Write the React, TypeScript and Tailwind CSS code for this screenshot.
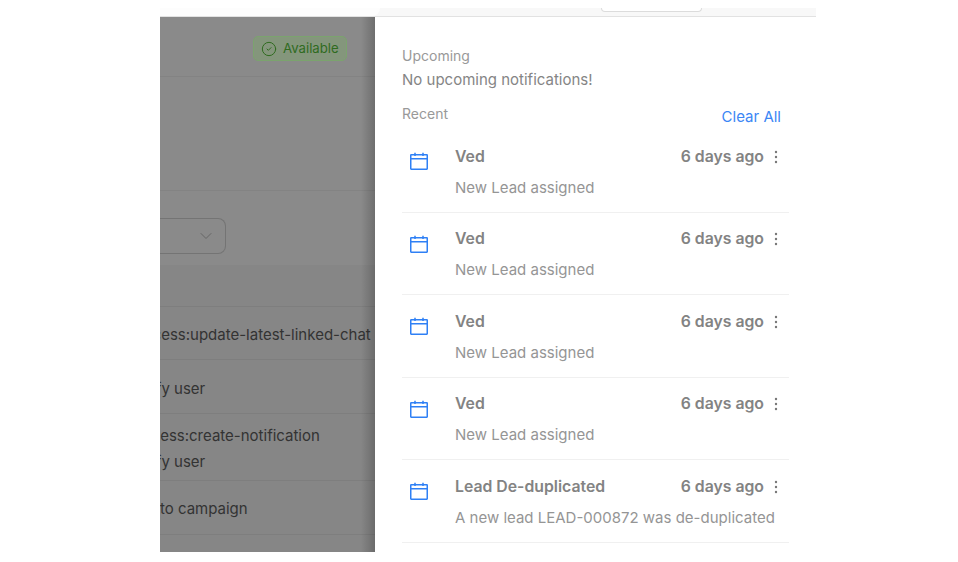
import React from "react";
import { CircleCheck, ChevronDown } from "lucide-react";

const notifications = [
  { title: "Ved", body: "New Lead assigned" },
  { title: "Ved", body: "New Lead assigned" },
  { title: "Ved", body: "New Lead assigned" },
  { title: "Ved", body: "New Lead assigned" },
  { title: "Lead De-duplicated", body: "A new lead LEAD-000872 was de-duplicated" },
];

function CalendarIcon() {
  return (
    <svg width="18" height="18" viewBox="0 0 18 18" fill="none" stroke="#2f80f5" strokeWidth="1.5" className="shrink-0">
      <rect x="0.75" y="2.75" width="16.5" height="14.5" rx="0.4" />
      <path d="M0.75 6.8H17.25M5 0.8V4M13 0.8V4" />
    </svg>
  );
}

function MoreDots() {
  return (
    <svg width="4" height="14" viewBox="0 0 4 14" fill="#777777" className="shrink-0">
      <circle cx="2" cy="2" r="1.2" />
      <circle cx="2" cy="7" r="1.2" />
      <circle cx="2" cy="12" r="1.2" />
    </svg>
  );
}

export default function App() {
  return (
    <div className="h-[562px] w-[958px] overflow-hidden bg-white pt-2 font-['Inter',sans-serif]">
      <div className="ml-[160px] w-[656px]">
        {/* Top strip of the page behind */}
        <div className="flex h-[9px] border-b border-[#e2e2e2] bg-[#f8f8f8]">
          <div className="h-[8px] w-[220px] rounded-br-lg bg-[#fdfdfd]" />
          <div className="ml-[221px] h-[4px] w-[101px] rounded-b-xl border border-t-0 border-[#dcdcdc] bg-white" />
        </div>

        <div className="flex">
          {/* Dimmed page */}
          <div className="relative flex h-[535px] w-[215px] flex-col overflow-hidden bg-[#8a8a8a] text-[15px] text-[#333333]">
            <div className="flex h-[60px] shrink-0 items-start justify-end border-b border-[#838383] pt-[19px] pr-[28px]">
              <div className="flex h-[25px] w-[94px] items-center gap-[6px] rounded-[5px] border border-[#7ba36e] bg-[#84967c] pl-[7px] text-[13.2px] text-[#2f6b1f]">
                <CircleCheck size={16} strokeWidth={1.5} />
                <span>Available</span>
              </div>
            </div>
            <div className="h-[114px] shrink-0 border-b border-[#838383]" />
            <div className="h-[74px] shrink-0 pt-[27px]">
              <div className="flex h-[36px] w-[66px] items-center justify-end rounded-r-lg border border-l-0 border-[#747474] pr-[9px] text-[#666666]">
                <ChevronDown size={20} strokeWidth={1.2} />
              </div>
            </div>
            <div className="flex flex-1 flex-col bg-[#868686]">
              <div className="h-[42px] shrink-0 border-b border-[#7e7e7e]" />
              <div className="flex h-[53px] shrink-0 items-center border-b border-[#7e7e7e] pt-[4px]">
                <span className="-ml-[31px] whitespace-nowrap">process:update-latest-linked-chat</span>
              </div>
              <div className="flex h-[54px] shrink-0 items-center border-b border-[#7e7e7e] pt-[5px]">
                <span className="-ml-[33px] whitespace-nowrap">Notify user</span>
              </div>
              <div className="flex h-[67px] shrink-0 flex-col justify-center gap-[3px] border-b border-[#7e7e7e] pt-[4px]">
                <span className="-ml-[32px] whitespace-nowrap">process:create-notification</span>
                <span className="-ml-[33px] whitespace-nowrap">Notify user</span>
              </div>
              <div className="flex h-[54px] shrink-0 items-center border-b border-[#7e7e7e] pt-[4px]">
                <span className="-ml-[33px] whitespace-nowrap">Add to campaign</span>
              </div>
            </div>
            {/* Drawer shadow falling on the page */}
            <div className="pointer-events-none absolute inset-y-0 right-0 w-[14px] bg-gradient-to-l from-black/20 to-transparent" />
          </div>

          {/* Notification panel */}
          <div className="w-[441px] bg-white pt-[30px] pr-[27px] pl-[27px]">
            <div className="text-[14px] leading-[17px] text-[#999999]">Upcoming</div>
            <div className="mt-[7px] text-[15px] leading-[18px] text-[#858585]">No upcoming notifications!</div>
            <div className="mt-[16px] flex h-[21px] items-start justify-between pr-[8px]">
              <span className="text-[14px] leading-[17px] text-[#999999]">Recent</span>
              <button className="mt-[3px] text-[15px] leading-[18px] text-[#3b86f5]">Clear All</button>
            </div>
            <div className="mt-[4px]">
              {notifications.map((item, index) => (
                <div key={index} className="flex h-[82.5px] gap-[27px] border-b border-[#f0f0f0] pt-[17.5px] pl-[8px]">
                  <div className="pt-[4.5px]">
                    <CalendarIcon />
                  </div>
                  <div className="min-w-0 flex-1 pr-[11px]">
                    <div className="flex items-center justify-between text-[15.8px] leading-[18px] font-semibold text-[#838383]">
                      <span>{item.title}</span>
                      <span className="flex items-center gap-[10px]">
                        6 days ago
                        <MoreDots />
                      </span>
                    </div>
                    <div className="mt-[13px] text-[15px] leading-[18px] whitespace-nowrap text-[#959595]">{item.body}</div>
                  </div>
                </div>
              ))}
            </div>
          </div>
        </div>
      </div>
    </div>
  );
}
